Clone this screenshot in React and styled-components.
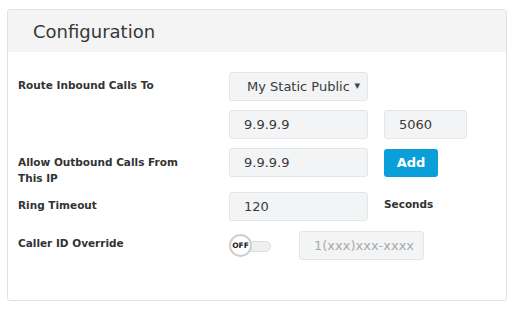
import React from 'react';
import styled, { createGlobalStyle } from 'styled-components';

const GlobalStyle = createGlobalStyle`
  * {
    margin: 0;
    padding: 0;
    box-sizing: border-box;
  }
  body {
    background: #fff;
    font-family: "DejaVu Sans", "Open Sans", sans-serif;
    color: #333;
  }
`;

const Page = styled.div`
  padding: 9px 9px 10px 7px;
`;

const Card = styled.section`
  width: 500px;
  border: 1px solid #e2e2e2;
  border-radius: 3px;
  background: #fff;
`;

const Header = styled.header`
  height: 42px;
  background: #f4f4f4;
  display: flex;
  align-items: center;
  padding-left: 25px;
  padding-top: 1px;
  font-size: 18px;
  color: #383838;
`;

const Body = styled.div`
  padding: 20px 0 40px 10px;
  display: flex;
  flex-direction: column;
`;

const Row = styled.div`
  display: flex;
  align-items: flex-start;
  margin-top: ${p => p.$mt || 0}px;
`;

const Label = styled.div`
  width: 211px;
  padding-top: ${p => p.$pt ?? 5}px;
  padding-right: 26px;
  font-size: 10.5px;
  font-weight: 700;
  line-height: 16px;
  color: #333;
`;

const Controls = styled.div`
  display: flex;
  align-items: center;
  gap: ${p => p.$gap ?? 16}px;
`;

const Field = styled.div`
  width: ${p => p.$w || 139}px;
  height: 29px;
  display: flex;
  align-items: center;
  padding-left: ${p => p.$pl ?? 14}px;
  background: #f3f4f5;
  border: 1px solid #e4e5e6;
  border-radius: 3px;
  font-size: 13px;
  color: ${p => (p.$placeholder ? '#a9a9a9' : '#3a3a3a')};
  white-space: nowrap;
  overflow: hidden;
`;

const Select = styled(Field)`
  position: relative;
  padding-right: 18px;
  &::after {
    content: '▾';
    position: absolute;
    right: 7px;
    top: 6px;
    font-size: 11px;
    color: #444;
  }
`;

const SelectText = styled.span`
  overflow: hidden;
  white-space: nowrap;
  text-overflow: clip;
`;

const AddButton = styled.button`
  width: 54px;
  height: 28px;
  border: 0;
  border-radius: 3px;
  background: #0b9fd9;
  color: #fff;
  font-family: inherit;
  font-size: 13px;
  font-weight: 700;
`;

const Unit = styled.span`
  font-size: 10.5px;
  font-weight: 700;
  color: #333;
  align-self: flex-start;
  padding-top: 6px;
`;

const Toggle = styled.div`
  width: 42px;
  height: 24px;
  display: flex;
  align-items: center;
  position: relative;
`;

const Track = styled.div`
  position: absolute;
  left: 10px;
  right: 0;
  top: 7px;
  height: 11px;
  background: #efefef;
  border: 1px solid #dcdcdc;
  border-radius: 6px;
`;

const Knob = styled.div`
  position: relative;
  width: 23px;
  height: 23px;
  border-radius: 50%;
  background: #fff;
  border: 2px solid #cfcfcf;
  display: flex;
  align-items: center;
  justify-content: center;
  font-size: 7.5px;
  font-weight: 600;
  color: #222;
`;

export default function App() {
  return (
    <>
      <GlobalStyle />
      <Page>
        <Card>
          <Header>Configuration</Header>
          <Body>
            <Row>
              <Label>Route Inbound Calls To</Label>
              <Controls>
                <Select $pl={17}>
                  <SelectText>My Static Public IP</SelectText>
                </Select>
              </Controls>
            </Row>
            <Row $mt={9}>
              <Label />
              <Controls>
                <Field>9.9.9.9</Field>
                <Field $w={83}>5060</Field>
              </Controls>
            </Row>
            <Row $mt={9}>
              <Label $pt={6}>Allow Outbound Calls From This IP</Label>
              <Controls>
                <Field>9.9.9.9</Field>
                <AddButton>Add</AddButton>
              </Controls>
            </Row>
            <Row $mt={6}>
              <Label>Ring Timeout</Label>
              <Controls>
                <Field>120</Field>
                <Unit>Seconds</Unit>
              </Controls>
            </Row>
            <Row $mt={10}>
              <Label $pt={4}>Caller ID Override</Label>
              <Controls $gap={28}>
                <Toggle>
                  <Track />
                  <Knob>OFF</Knob>
                </Toggle>
                <Field $w={125} $placeholder>1(xxx)xxx-xxxx</Field>
              </Controls>
            </Row>
          </Body>
        </Card>
      </Page>
    </>
  );
}
